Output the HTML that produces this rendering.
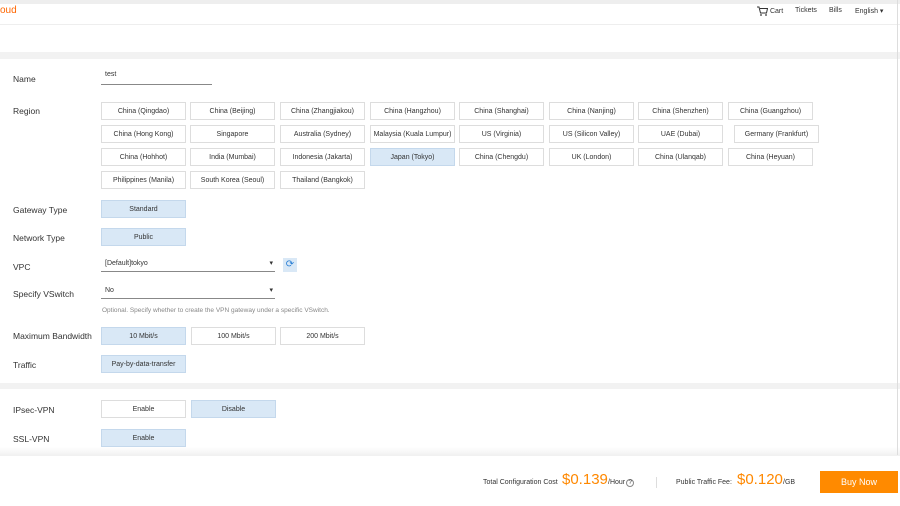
<!DOCTYPE html><html><head><style>
*{margin:0;padding:0;box-sizing:border-box}
body{width:900px;height:506px;background:#fff;font-family:"Liberation Sans",Arial,sans-serif;font-size:8px;color:#333;position:relative;overflow:hidden}
.a{position:absolute}
.lbl{position:absolute;left:13px;font-size:8.5px;color:#333}
.b{position:absolute;width:85px;height:18px;border:1px solid #ddd;background:#fff;text-align:center;line-height:17px;font-size:7px;color:#333}
.s{background:#d9e8f6;border-color:#c4d8ec}
.g{position:absolute;left:0;width:900px;background:#f2f2f2}
.f{position:absolute;left:101px;width:174px;height:15px;border-bottom:1px solid #888;font-size:7px;padding-left:4px;line-height:14px}
</style></head><body>
<div class="g" style="top:0;height:4px;background:#eee"></div>
<div class="a" style="left:0;top:5px;color:#f60;font-size:10px">oud</div>
<div class="a" style="left:757px;top:6px;font-size:7px;color:#333">
<svg width="11" height="10" viewBox="0 0 11 10" style="vertical-align:middle"><path d="M0 1h2l1.5 6h6l1-4.5H3" fill="none" stroke="#333" stroke-width="1"/><circle cx="4" cy="9" r=".9" fill="#333"/><circle cx="9" cy="9" r=".9" fill="#333"/></svg> Cart</div>
<div class="a" style="left:795px;top:7px;font-size:7px">Tickets</div>
<div class="a" style="left:829px;top:7px;font-size:7px">Bills</div>
<div class="a" style="left:855px;top:7px;font-size:7px">English ▾</div>
<div class="a" style="left:0;top:24px;width:900px;height:1px;background:#eee"></div>
<div class="g" style="top:52px;height:7px"></div>
<div class="lbl" style="top:74px">Name</div>
<div class="a" style="left:101px;top:71px;width:111px;height:14px;border-bottom:1px solid #888;font-size:7px;padding-left:4px">test</div>
<div class="lbl" style="top:106px">Region</div>
<div class="b" style="left:101px;top:102px">China (Qingdao)</div>
<div class="b" style="left:190px;top:102px">China (Beijing)</div>
<div class="b" style="left:280px;top:102px">China (Zhangjiakou)</div>
<div class="b" style="left:370px;top:102px">China (Hangzhou)</div>
<div class="b" style="left:459px;top:102px">China (Shanghai)</div>
<div class="b" style="left:549px;top:102px">China (Nanjing)</div>
<div class="b" style="left:638px;top:102px">China (Shenzhen)</div>
<div class="b" style="left:728px;top:102px">China (Guangzhou)</div>
<div class="b" style="left:101px;top:125px">China (Hong Kong)</div>
<div class="b" style="left:190px;top:125px">Singapore</div>
<div class="b" style="left:280px;top:125px">Australia (Sydney)</div>
<div class="b" style="left:370px;top:125px">Malaysia (Kuala Lumpur)</div>
<div class="b" style="left:459px;top:125px">US (Virginia)</div>
<div class="b" style="left:549px;top:125px">US (Silicon Valley)</div>
<div class="b" style="left:638px;top:125px">UAE (Dubai)</div>
<div class="b" style="left:734px;top:125px">Germany (Frankfurt)</div>
<div class="b" style="left:101px;top:148px">China (Hohhot)</div>
<div class="b" style="left:190px;top:148px">India (Mumbai)</div>
<div class="b" style="left:280px;top:148px">Indonesia (Jakarta)</div>
<div class="b s" style="left:370px;top:148px">Japan (Tokyo)</div>
<div class="b" style="left:459px;top:148px">China (Chengdu)</div>
<div class="b" style="left:549px;top:148px">UK (London)</div>
<div class="b" style="left:638px;top:148px">China (Ulanqab)</div>
<div class="b" style="left:728px;top:148px">China (Heyuan)</div>
<div class="b" style="left:101px;top:171px">Philippines (Manila)</div>
<div class="b" style="left:190px;top:171px">South Korea (Seoul)</div>
<div class="b" style="left:280px;top:171px">Thailand (Bangkok)</div>
<div class="lbl" style="top:205px">Gateway Type</div>
<div class="b s" style="left:101px;top:200px">Standard</div>
<div class="lbl" style="top:233px">Network Type</div>
<div class="b s" style="left:101px;top:228px">Public</div>
<div class="lbl" style="top:262px">VPC</div>
<div class="f" style="top:257px">[Default]tokyo<span style="position:absolute;right:2px">▾</span></div>
<div class="a" style="left:283px;top:258px;width:14px;height:14px;background:#d9e8f6;color:#2a7fd4;font-size:10px;text-align:center;line-height:14px">⟳</div>
<div class="lbl" style="top:289px">Specify VSwitch</div>
<div class="f" style="top:284px">No<span style="position:absolute;right:2px">▾</span></div>
<div class="a" style="left:102px;top:307px;font-size:6.5px;color:#888">Optional. Specify whether to create the VPN gateway under a specific VSwitch.</div>
<div class="lbl" style="top:331px">Maximum Bandwidth</div>
<div class="b s" style="left:101px;top:327px">10 Mbit/s</div>
<div class="b" style="left:191px;top:327px">100 Mbit/s</div>
<div class="b" style="left:280px;top:327px">200 Mbit/s</div>
<div class="lbl" style="top:360px">Traffic</div>
<div class="b s" style="left:101px;top:355px">Pay-by-data-transfer</div>
<div class="g" style="top:383px;height:6px"></div>
<div class="lbl" style="top:405px">IPsec-VPN</div>
<div class="b" style="left:101px;top:400px">Enable</div>
<div class="b s" style="left:191px;top:400px">Disable</div>
<div class="lbl" style="top:434px">SSL-VPN</div>
<div class="b s" style="left:101px;top:429px">Enable</div>
<div class="a" style="left:0;top:447px;width:900px;height:9px;background:linear-gradient(#fff,#f0f0f0)"></div>
<div class="a" style="left:897px;top:0;width:1px;height:455px;background:#ddd"></div>
<div class="a" style="left:483px;top:479px;font-size:7px">Total Configuration Cost</div>
<div class="a" style="left:562px;top:471px;font-size:15px;color:#f80">$0.139</div>
<div class="a" style="left:608px;top:479px;font-size:7px">/Hour<span style="display:inline-block;width:8px;height:8px;border:1px solid #888;border-radius:50%;font-size:6px;text-align:center;line-height:7px;margin-left:1px">?</span></div>
<div class="a" style="left:656px;top:477px;width:1px;height:11px;background:#ddd"></div>
<div class="a" style="left:676px;top:479px;font-size:7px">Public Traffic Fee:</div>
<div class="a" style="left:737px;top:471px;font-size:15px;color:#f80">$0.120</div>
<div class="a" style="left:783px;top:479px;font-size:7px">/GB</div>
<div class="a" style="left:820px;top:471px;width:78px;height:22px;background:#ff8a00;color:#fff;font-size:9px;text-align:center;line-height:22px">Buy Now</div>
</body></html>
